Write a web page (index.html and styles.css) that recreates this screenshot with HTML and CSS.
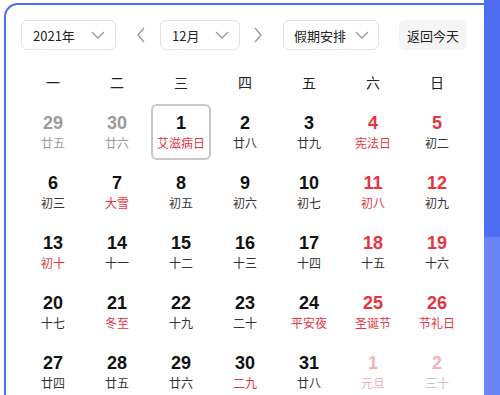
FILE: index.html
```html
<!DOCTYPE html>
<html lang="zh-CN">
<head>
    <meta charset="UTF-8">
    <title>万年历</title>
    <link rel="stylesheet" href="styles.css">
</head>
<body>
    <div class="calendar">
        <!-- Toolbar -->
        <div class="toolbar">
            <div class="select select-year">
                <span>2021年</span>
                <svg class="chevron" width="14" height="8" viewBox="0 0 14 8"><polyline points="1,1 7,7 13,1"/></svg>
            </div>
            <svg class="arrow arrow-prev" width="10" height="16" viewBox="0 0 10 16"><polyline points="8,1 2,8 8,15"/></svg>
            <div class="select select-month">
                <span>12月</span>
                <svg class="chevron" width="14" height="8" viewBox="0 0 14 8"><polyline points="1,1 7,7 13,1"/></svg>
            </div>
            <svg class="arrow arrow-next" width="10" height="16" viewBox="0 0 10 16"><polyline points="2,1 8,8 2,15"/></svg>
            <div class="select select-holiday">
                <span>假期安排</span>
                <svg class="chevron" width="14" height="8" viewBox="0 0 14 8"><polyline points="1,1 7,7 13,1"/></svg>
            </div>
            <button class="today-btn">返回今天</button>
        </div>

        <!-- Week header -->
        <div class="week">
            <span>一</span><span>二</span><span>三</span><span>四</span><span>五</span><span>六</span><span>日</span>
        </div>

        <!-- Days -->
        <div class="days" id="days"></div>
    </div>
    <div class="side"></div>

    <script>
        // day, lunar, classes
        const days = [
            ['29', '廿五', 'other'], ['30', '廿六', 'other'], ['1', '艾滋病日', 'selected fest'], ['2', '廿八', ''], ['3', '廿九', ''], ['4', '宪法日', 'rest fest'], ['5', '初二', 'rest'],
            ['6', '初三', ''], ['7', '大雪', 'fest'], ['8', '初五', ''], ['9', '初六', ''], ['10', '初七', ''], ['11', '初八', 'rest fest'], ['12', '初九', 'rest'],
            ['13', '初十', 'fest'], ['14', '十一', ''], ['15', '十二', ''], ['16', '十三', ''], ['17', '十四', ''], ['18', '十五', 'rest'], ['19', '十六', 'rest'],
            ['20', '十七', ''], ['21', '冬至', 'fest'], ['22', '十九', ''], ['23', '二十', ''], ['24', '平安夜', 'fest'], ['25', '圣诞节', 'rest fest'], ['26', '节礼日', 'rest fest'],
            ['27', '廿四', ''], ['28', '廿五', ''], ['29', '廿六', ''], ['30', '二九', 'fest'], ['31', '廿八', ''], ['1', '元旦', 'next fest'], ['2', '三十', 'next']
        ];

        const container = document.getElementById('days');
        days.forEach(d => {
            const cell = document.createElement('div');
            cell.className = 'day ' + d[2];
            cell.innerHTML = `<span class="num">${d[0]}</span><span class="lunar">${d[1]}</span>`;
            container.appendChild(cell);
        });
    </script>
</body>
</html>
```

FILE: styles.css
```css
* {
    margin: 0;
    padding: 0;
    box-sizing: border-box;
}

body {
    display: flex;
    align-items: flex-start;
    width: 500px;
    height: 395px;
    overflow: hidden;
    background-color: #fff;
    font-family: "Noto Sans CJK SC", "Liberation Sans", sans-serif;
    color: #222;
}

/* Calendar card */
.calendar {
    width: 480px;
    height: 392px;
    margin: 3px 0 0 4px;
    padding: 15px 0 0 15px;
    border-top: 2px solid #4e6ef2;
    border-left: 2px solid #4e6ef2;
    border-top-left-radius: 14px;
}

.side {
    width: 16px;
    height: 395px;
    background: linear-gradient(#4e6ef2 0, #4e6ef2 236px, #6c85f6 238px, #6c85f6 100%);
}

/* Toolbar */
.toolbar {
    display: flex;
    align-items: center;
    height: 30px;
}

.select {
    display: flex;
    align-items: center;
    justify-content: space-between;
    height: 30px;
    padding: 0 10px 0 11px;
    border: 1px solid #e2e2e2;
    border-radius: 6px;
    font-size: 13px;
    color: #222;
}

.select-year {
    width: 95px;
}

.select-month {
    width: 80px;
}

.select-holiday {
    width: 96px;
    padding: 0 9px 0 10px;
}

.chevron polyline, .arrow polyline {
    fill: none;
    stroke: #9a9a9a;
    stroke-width: 1.4;
}

.arrow-prev {
    margin: 0 14px 0 20px;
}

.arrow-next {
    margin: 0 20px 0 13px;
}

.today-btn {
    margin-left: 20px;
    width: 68px;
    height: 30px;
    border: none;
    border-radius: 6px;
    background-color: #f5f5f6;
    font-family: inherit;
    font-size: 13px;
    color: #222;
}

/* Week header */
.week {
    display: grid;
    grid-template-columns: repeat(7, 60px);
    column-gap: 4px;
    margin: 20px 0 0 2px;
    height: 24px;
    align-items: center;
    font-size: 14px;
    text-align: center;
    color: #222;
}

/* Days */
.days {
    display: grid;
    grid-template-columns: repeat(7, 60px);
    grid-auto-rows: 56px;
    gap: 4px;
    margin: 10px 0 0 2px;
}

.day {
    display: flex;
    flex-direction: column;
    align-items: center;
    justify-content: center;
    gap: 2px;
    border: 2px solid transparent;
    border-radius: 6px;
}

.num {
    font-family: "Liberation Sans", Arial, sans-serif;
    font-size: 18px;
    font-weight: bold;
    line-height: 20px;
    color: #111;
}

.lunar {
    font-size: 12px;
    line-height: 16px;
    color: #333;
}

.day.selected {
    border-color: #c5c7cd;
}

.day.rest .num, .day.fest .lunar {
    color: #e5343f;
}

.day.other .num, .day.other .lunar {
    color: #9b9b9b;
}

.day.next .num {
    color: #f3b4b9;
}

.day.next .lunar {
    color: #c4c4c4;
}

.day.next.fest .lunar {
    color: #f0b0b6;
}
```
